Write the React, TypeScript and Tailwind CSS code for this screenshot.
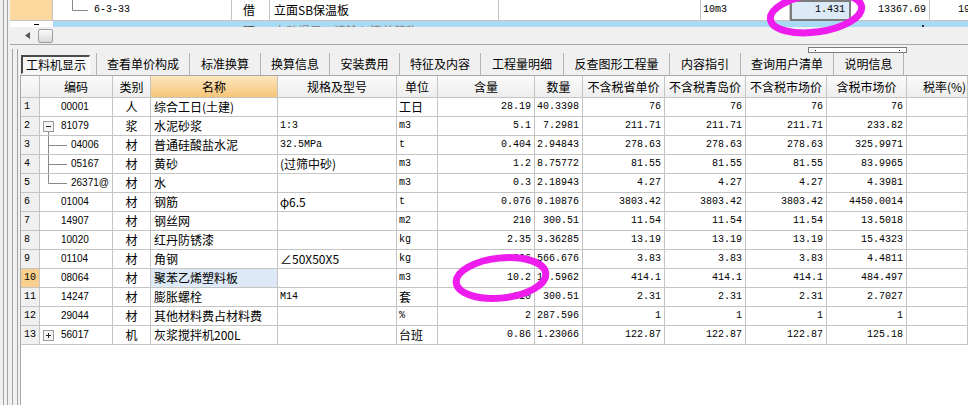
import React from "react";

type Item = {
  n: number;
  code: string;
  tree?: "open" | "closed" | "mid" | "last";
  cat: string;
  name: string;
  spec: string;
  unit: string;
  qty: string;
  amt: string;
  p1: string;
  p2: string;
  p3: string;
  p4: string;
};

const rows: Item[] = [
  { n: 1, code: "00001", cat: "人", name: "综合工日(土建)", spec: "", unit: "工日", qty: "28.19", amt: "40.3398", p1: "76", p2: "76", p3: "76", p4: "76" },
  { n: 2, code: "81079", tree: "open", cat: "浆", name: "水泥砂浆", spec: "1:3", unit: "m3", qty: "5.1", amt: "7.2981", p1: "211.71", p2: "211.71", p3: "211.71", p4: "233.82" },
  { n: 3, code: "04006", tree: "mid", cat: "材", name: "普通硅酸盐水泥", spec: "32.5MPa", unit: "t", qty: "0.404", amt: "2.94843", p1: "278.63", p2: "278.63", p3: "278.63", p4: "325.9971" },
  { n: 4, code: "05167", tree: "mid", cat: "材", name: "黄砂", spec: "(过筛中砂)", unit: "m3", qty: "1.2", amt: "8.75772", p1: "81.55", p2: "81.55", p3: "81.55", p4: "83.9965" },
  { n: 5, code: "26371@", tree: "last", cat: "材", name: "水", spec: "", unit: "m3", qty: "0.3", amt: "2.18943", p1: "4.27", p2: "4.27", p3: "4.27", p4: "4.3981" },
  { n: 6, code: "01004", cat: "材", name: "钢筋", spec: "φ6.5", unit: "t", qty: "0.076", amt: "0.10876", p1: "3803.42", p2: "3803.42", p3: "3803.42", p4: "4450.0014" },
  { n: 7, code: "14907", cat: "材", name: "钢丝网", spec: "", unit: "m2", qty: "210", amt: "300.51", p1: "11.54", p2: "11.54", p3: "11.54", p4: "13.5018" },
  { n: 8, code: "10020", cat: "材", name: "红丹防锈漆", spec: "", unit: "kg", qty: "2.35", amt: "3.36285", p1: "13.19", p2: "13.19", p3: "13.19", p4: "15.4323" },
  { n: 9, code: "01104", cat: "材", name: "角钢", spec: "∠50X50X5", unit: "kg", qty: "306", amt: "566.676", p1: "3.83", p2: "3.83", p3: "3.83", p4: "4.4811" },
  { n: 10, code: "08064", cat: "材", name: "聚苯乙烯塑料板", spec: "", unit: "m3", qty: "10.2", amt: "14.5962", p1: "414.1", p2: "414.1", p3: "414.1", p4: "484.497" },
  { n: 11, code: "14247", cat: "材", name: "膨胀螺栓", spec: "M14", unit: "套", qty: "210", amt: "300.51", p1: "2.31", p2: "2.31", p3: "2.31", p4: "2.7027" },
  { n: 12, code: "29044", cat: "材", name: "其他材料费占材料费", spec: "", unit: "%", qty: "2", amt: "287.596", p1: "1", p2: "1", p3: "1", p4: "1" },
  { n: 13, code: "56017", tree: "closed", cat: "机", name: "灰浆搅拌机200L", spec: "", unit: "台班", qty: "0.86", amt: "1.23066", p1: "122.87", p2: "122.87", p3: "122.87", p4: "125.18" },
];

const tabs = [
  { label: "工料机显示", w: "w-[77px]" },
  { label: "查看单价构成", w: "w-[93px]" },
  { label: "标准换算", w: "w-[71px]" },
  { label: "换算信息", w: "w-[69px]" },
  { label: "安装费用", w: "w-[70px]" },
  { label: "特征及内容", w: "w-[81px]" },
  { label: "工程量明细", w: "w-[83px]" },
  { label: "反查图形工程量", w: "w-[106px]" },
  { label: "内容指引", w: "w-[71px]" },
  { label: "查询用户清单", w: "w-[93px]" },
  { label: "说明信息", w: "w-[70px]" },
];

const COLS = "grid grid-cols-[19px_73px_38px_127px_119px_41px_97px_48px_82px_81px_81px_80px_61px]";
const CELL = "border-r border-b border-[#c4c4c4] overflow-hidden whitespace-nowrap";
const MONO = "font-['Liberation_Mono',monospace] text-[10px]";
const CJK = "font-['Noto_Sans_CJK_SC',sans-serif] text-[12px]";
const NUM = "border-r border-b border-[#c4c4c4] overflow-hidden whitespace-nowrap text-right pr-[3px] font-['Liberation_Mono',monospace] text-[10px]";

function isAscii(s: string) {
  return /^[\x00-\x7f]*$/.test(s);
}

function TreeMark({ kind }: { kind: Item["tree"] }) {
  if (!kind) return null;
  return (
    <svg className="absolute left-0 top-0" width="30" height="19" viewBox="0 0 30 19">
      {(kind === "open" || kind === "closed") && (
        <>
          <rect x="3.5" y="4.5" width="10" height="10" fill="#f4f4f4" stroke="#9a9a9a" />
          <line x1="6" y1="9.5" x2="11" y2="9.5" stroke="#222" />
          {kind === "closed" && <line x1="8.5" y1="7" x2="8.5" y2="12" stroke="#222" />}
          {kind === "open" && <line x1="8.5" y1="15" x2="8.5" y2="19" stroke="#8a8a8a" />}
        </>
      )}
      {(kind === "mid" || kind === "last") && (
        <>
          <line x1="8.5" y1="0" x2="8.5" y2={kind === "mid" ? 19 : 9.5} stroke="#8a8a8a" />
          <line x1="8.5" y1="9.5" x2="27" y2="9.5" stroke="#8a8a8a" />
        </>
      )}
    </svg>
  );
}

function Row({ r }: { r: Item }) {
  const sel = r.n === 10;
  const child = r.tree === "mid" || r.tree === "last";
  return (
    <div className={`${COLS} h-[19px] leading-[18px] text-black`}>
      <div className={`${CELL} ${MONO} pl-[3px] ${sel ? "bg-[#f8cf8c]" : "bg-[#f0f0f0]"}`}>{r.n}</div>
      <div className={`${CELL} relative font-['Liberation_Sans',sans-serif] text-[10px] ${child ? "pl-[31px]" : "pl-[21px]"}`}>
        <TreeMark kind={r.tree} />
        <span className="relative">{r.code}</span>
      </div>
      <div className={`${CELL} ${CJK} text-center`}>{r.cat}</div>
      <div className={`${CELL} ${CJK} pl-[3px] ${sel ? "bg-[#dde9f7]" : ""}`}>{r.name}</div>
      <div className={`${CELL} pl-[2px] ${isAscii(r.spec) ? MONO : CJK}`}>{r.spec}</div>
      <div className={`${CELL} pl-[2px] ${isAscii(r.unit) ? MONO : CJK}`}>{r.unit}</div>
      <div className={NUM}>{r.qty}</div>
      <div className={NUM}>{r.amt}</div>
      <div className={NUM}>{r.p1}</div>
      <div className={NUM}>{r.p2}</div>
      <div className={NUM}>{r.p3}</div>
      <div className={NUM}>{r.p4}</div>
      <div className={CELL}></div>
    </div>
  );
}

function Header() {
  const heads = ["编码", "类别", "名称", "规格及型号", "单位", "含量", "数量", "不含税省单价", "不含税青岛价", "不含税市场价", "含税市场价"];
  return (
    <div className={`${COLS} h-[22px] leading-[21px] ${CJK} text-black bg-linear-to-b from-[#fbfbfb] to-[#ededed]`}>
      <div className={CELL}></div>
      {heads.map((h) => (
        <div
          key={h}
          className={`${CELL} text-center ${h === "名称" ? "bg-linear-to-b from-[#fde6bd] to-[#f6c677]" : ""}`}
        >
          {h}
        </div>
      ))}
      <div className={`${CELL} pl-[16px]`}>税率(%)</div>
    </div>
  );
}

function TopGrid() {
  const cols = "grid grid-cols-[43px_179px_38px_229px_202px_89px_61px_79px_48px]";
  const c = "border-r border-b border-[#c4c4c4] overflow-hidden whitespace-nowrap";
  return (
    <div className="h-[27px] overflow-hidden bg-white">
      <div className={`${cols} h-[21px] leading-[20px] text-black`}>
        <div className={`${c} bg-[#fbd89d]`}></div>
        <div className={`${c} relative pl-[41px] font-['Liberation_Mono',monospace] text-[10px]`}>
          <svg className="absolute left-0 top-0" width="40" height="20" viewBox="0 0 40 20">
            <line x1="19.5" y1="0" x2="19.5" y2="10.5" stroke="#8a8a8a" />
            <line x1="19.5" y1="10.5" x2="35" y2="10.5" stroke="#8a8a8a" />
          </svg>
          <span className="relative">6-3-33</span>
        </div>
        <div className={`${c} ${CJK} pl-[11px]`}>借</div>
        <div className={`${c} ${CJK} pl-[4px]`}>立面SB保温板</div>
        <div className={c}></div>
        <div className={`${c} ${MONO} pl-[2px]`}>10m3</div>
        <div className={`border-2 border-[#7c7c7c] bg-[#dce9f7] text-right pr-[4px] ${MONO} leading-[16px]`}>1.431</div>
        <div className={`${c} ${MONO} text-right pr-[3px]`}>13367.69</div>
        <div className={`${c} ${MONO} pl-[28px]`}>19</div>
      </div>
      <div className={`${cols} h-[19px] bg-[#a8dbf3] overflow-hidden`}>
        <div className="bg-white pl-[24px] pt-[3px]">
          <div className="h-[1px] w-[5px] bg-black"></div>
        </div>
        <div></div>
        <div className={`${CJK} pl-[11px] leading-[20px] text-[#444]`}>项</div>
        <div className={`${CJK} pl-[4px] leading-[20px] text-[#888] whitespace-nowrap`}>自动提示：请输入清单简称</div>
        <div></div>
        <div></div>
        <div className="flex justify-end pr-[6px] pt-[4px]">
          <div className="h-[2px] w-[1px] bg-[#333]"></div>
        </div>
        <div className="flex justify-end pr-[6px] pt-[4px]">
          <div className="h-[2px] w-[2px] bg-[#333]"></div>
        </div>
        <div></div>
      </div>
    </div>
  );
}

export default function App() {
  return (
    <div className="relative flex h-[405px] w-[968px] overflow-hidden bg-[#f0f0f0]">
      <div className="w-[10px] shrink-0 pl-[3px]">
        <div className="h-full w-[5px] border-x border-[#a4a4a4]"></div>
      </div>
      <div className="flex min-w-0 flex-1 flex-col">
        <TopGrid />
        <div className="flex h-[18px] items-center border-b border-[#a8a8a8] pl-[15px]">
          <svg width="5" height="7" viewBox="0 0 5 7">
            <polygon points="5,0 0,3.5 5,7" fill="#5a5a5a" />
          </svg>
          <div className="ml-[8px] h-[14px] w-[15px] rounded-[2px] border border-[#9c9c9c] bg-linear-to-b from-[#fbfbfb] to-[#d9d9d9]"></div>
        </div>
        <div className="flex min-h-0 flex-1">
          <div className="w-[10px] shrink-0 pl-[2px] pt-[4px]">
            <div className="h-full w-[6px] border-x border-[#a4a4a4]"></div>
          </div>
          <div className="flex min-w-0 flex-1 flex-col">
            <div className="h-[8px] pl-[788px] pt-[2px]">
              <div className="flex h-[6px] w-[99px] items-center justify-between border border-[#7c7c7c] bg-white px-[6px]">
                <div className="h-[1px] w-[1px] bg-black"></div>
                <div className="h-[1px] w-[1px] bg-black"></div>
              </div>
            </div>
            <div className={`flex h-[22px] items-stretch ${CJK} text-black`}>
              {tabs.map((t, i) => (
                <div key={t.label} className={`${t.w} flex shrink-0 items-center border-r border-[#b4b4b4] py-[1px]`}>
                  {i === 0 ? (
                    <div className="ml-[1px] flex h-[19px] w-[69px] items-center justify-center border-t-2 border-l-2 border-b border-r border-t-[#4a4a4a] border-l-[#4a4a4a] border-b-white border-r-white bg-[#f6f6f6]">
                      {t.label}
                    </div>
                  ) : (
                    <div className="w-full text-center">{t.label}</div>
                  )}
                </div>
              ))}
            </div>
            <div className="flex-1 border-t border-l border-[#a8a8a8] bg-white">
              <Header />
              {rows.map((r) => (
                <Row key={r.n} r={r} />
              ))}
            </div>
          </div>
        </div>
      </div>
      <svg className="pointer-events-none absolute left-0 top-0" width="968" height="405" viewBox="0 0 968 405">
        <ellipse cx="816" cy="13" rx="46" ry="19" transform="rotate(-8 816 13)" fill="none" stroke="#ee1dee" strokeWidth="7" />
        <ellipse cx="501" cy="278" rx="45" ry="20" transform="rotate(-6 501 278)" fill="none" stroke="#ee1dee" strokeWidth="7" />
      </svg>
    </div>
  );
}
